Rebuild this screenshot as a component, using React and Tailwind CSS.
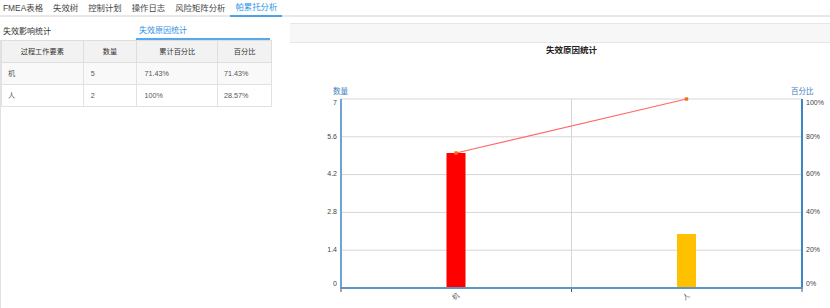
import React from "react";

const TABS = ["FMEA表格", "失效树", "控制计划", "操作日志", "风险矩阵分析", "帕累托分析"];

const ROWS = [
  { name: "机", count: "5", cum: "71.43%", pct: "71.43%" },
  { name: "人", count: "2", cum: "100%", pct: "28.57%" },
];

// plot box in page coordinates
const L = 341, R = 802, T = 99, B = 288;
const H = B - T;
const yAt = (v, max) => B - (v / max) * H;
const clampY = (y) => Math.min(Math.max(y, T + 4), B - 4);

const LEFT_TICKS = [0, 1.4, 2.8, 4.2, 5.6, 7];
const RIGHT_TICKS = [0, 20, 40, 60, 80, 100];

const ParetoChart = () => {
  const mid = (L + R) / 2;
  const cats = [
    { label: "机", x: 456, v: 5, cum: 71.43, color: "#ff0000" },
    { label: "人", x: 686.5, v: 2, cum: 100, color: "#ffc000" },
  ];
  return (
    <svg width="540" height="265" viewBox="290 43 540 265" className="block">
      <text x={mid} y={51} textAnchor="middle" dominantBaseline="middle" fontSize="8.5" fontWeight="700" fill="#222">
        失效原因统计
      </text>

      {/* grid */}
      {LEFT_TICKS.map((t) => (
        <line key={t} x1={L} x2={R} y1={yAt(t, 7)} y2={yAt(t, 7)} stroke="#d6d6d6" strokeWidth="1" />
      ))}
      <line x1={mid} x2={mid} y1={T} y2={B} stroke="#d6d6d6" strokeWidth="1" />

      {/* bars */}
      {cats.map((c) => (
        <rect key={c.label} x={c.x - 9.5} y={yAt(c.v, 7)} width="19" height={B - yAt(c.v, 7)} fill={c.color} />
      ))}

      {/* cumulative line */}
      <polyline
        points={cats.map((c) => `${c.x},${yAt(c.cum, 100)}`).join(" ")}
        fill="none"
        stroke="#ff6a6a"
        strokeWidth="1.2"
      />
      {cats.map((c) => (
        <rect key={c.label} x={c.x - 1.7} y={yAt(c.cum, 100) - 1.7} width="3.4" height="3.4" fill="#ec730f" />
      ))}

      {/* axes */}
      <line x1={L} x2={L} y1={T} y2={B + 1} stroke="#6fa3d3" strokeWidth="2" />
      <line x1={R} x2={R} y1={T} y2={B + 1} stroke="#3a86c6" strokeWidth="2" />
      <line x1={L - 1} x2={R + 1} y1={B} y2={B} stroke="#5e94c8" strokeWidth="2" />
      {[L, mid, R].map((x) => (
        <line key={x} x1={x} x2={x} y1={B + 1} y2={B + 4} stroke="#555" strokeWidth="1" />
      ))}

      {/* axis names */}
      <text x={333} y={92} dominantBaseline="middle" fontSize="7.5" fill="#3f80c0">数量</text>
      <text x={791} y={92} dominantBaseline="middle" fontSize="7.5" fill="#3f80c0">百分比</text>

      {/* tick labels */}
      {LEFT_TICKS.map((t) => (
        <text key={t} x={337} y={clampY(yAt(t, 7))} textAnchor="end" dominantBaseline="middle" fontSize="7" fill="#444">
          {t}
        </text>
      ))}
      {RIGHT_TICKS.map((t) => (
        <text key={t} x={806} y={clampY(yAt(t, 100))} dominantBaseline="middle" fontSize="7" fill="#444">
          {t}%
        </text>
      ))}
      {cats.map((c) => (
        <text
          key={c.label}
          x={c.x}
          y={297}
          textAnchor="middle"
          dominantBaseline="middle"
          fontSize="7"
          fill="#555"
          transform={`rotate(-35 ${c.x} 297)`}
        >
          {c.label}
        </text>
      ))}
    </svg>
  );
};

export default function App() {
  return (
    <div className="w-[830px] h-[308px] overflow-hidden bg-white flex flex-col font-['Liberation_Sans','Noto_Sans_CJK_SC',sans-serif]">
      {/* top tabs */}
      <div className="h-[17px] flex border-b-2 border-[#e8e8e8]">
        <div className="flex ml-[-2px]">
          {TABS.map((t, i) => (
            <div
              key={t}
              className={`h-[17px] px-[5px] flex items-center text-[8.4px] leading-none ${
                i === TABS.length - 1
                  ? "text-[#2f93e6] border-b-2 border-[#49a3ea] -mb-[2px]"
                  : "text-[#444]"
              }`}
            >
              {t}
            </div>
          ))}
        </div>
      </div>

      <div className="flex flex-1 min-h-0">
        {/* left: statistics table */}
        <div className="w-[272px] flex flex-col pt-[5px]">
          <div className="flex h-[18px] text-[8px] leading-none">
            <div className="w-[136px] pl-[3px] pt-[1px] flex items-center text-[#333]">失效影响统计</div>
            <div className="w-[134px] pl-[3px] pt-[1px] flex items-center text-[#2f93e6] border-b-2 border-[#55aaee]">
              失效原因统计
            </div>
          </div>
          <div className="flex-1 border-l border-[#e2e2e2]">
            <table className="border-collapse text-[7.2px] leading-none">
              <thead>
                <tr className="h-[22px] bg-[#f2f2f2] text-[#333]">
                  <th className="w-[82px] border border-[#dedede] font-normal">过程工作要素</th>
                  <th className="w-[54px] border border-[#dedede] font-normal">数量</th>
                  <th className="w-[81px] border border-[#dedede] font-normal">累计百分比</th>
                  <th className="w-[54px] border border-[#dedede] font-normal">百分比</th>
                </tr>
              </thead>
              <tbody>
                {ROWS.map((r, i) => (
                  <tr key={r.name} className={`h-[22px] text-[#555] ${i === 0 ? "bg-[#f9f9f9]" : "bg-white"}`}>
                    <td className="border border-[#e2e2e2] pl-[6px]">{r.name}</td>
                    <td className="border border-[#e2e2e2] pl-[7px]">{r.count}</td>
                    <td className="border border-[#e2e2e2] pl-[7px]">{r.cum}</td>
                    <td className="border border-[#e2e2e2] pl-[6px]">{r.pct}</td>
                  </tr>
                ))}
              </tbody>
            </table>
          </div>
        </div>

        {/* right: pareto chart */}
        <div className="ml-[18px] flex-1 flex flex-col pt-[6px]">
          <div className="h-[20px] bg-[#f7f7f7] border-y border-[#e6e6e6]" />
          <ParetoChart />
        </div>
      </div>
    </div>
  );
}
